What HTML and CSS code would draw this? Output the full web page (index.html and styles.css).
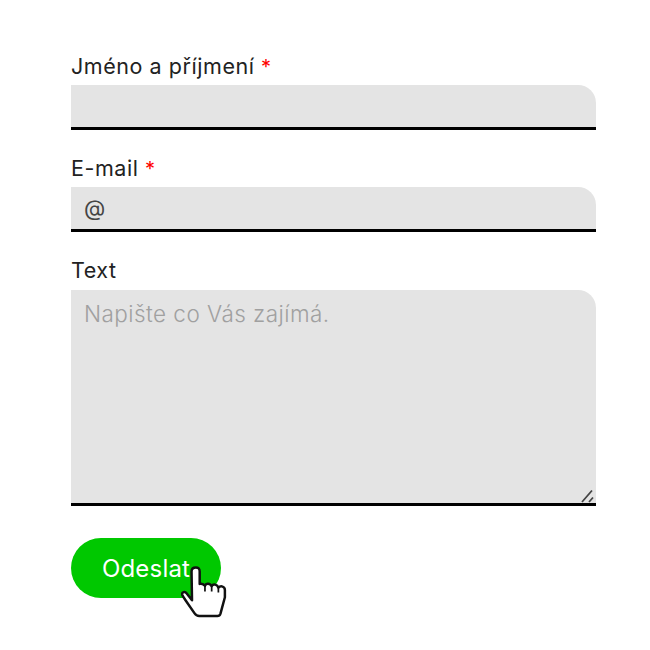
FILE: index.html
```html
<!DOCTYPE html>
<html lang="cs">
<head>
<meta charset="utf-8">
<title>Formulář</title>
<link rel="stylesheet" href="styles.css">
</head>
<body>
<form class="form">
  <div class="field">
    <label class="label">Jméno a příjmení <span class="req">*</span></label>
    <div class="input"></div>
  </div>
  <div class="field">
    <label class="label">E-mail <span class="req">*</span></label>
    <div class="input">@</div>
  </div>
  <div class="field">
    <label class="label">Text</label>
    <div class="textarea">Napište co Vás zajímá.
      <svg class="grip" width="16" height="15" viewBox="0 0 16 15"><path d="M2 14L12 2.5M9 14L13 9.5" stroke="#444" stroke-width="1.8" fill="none"/></svg>
    </div>
  </div>
  <div class="actions">
    <span class="button">Odeslat</span>
    <svg class="hand" width="46" height="55" viewBox="0 0 48 56">
      <path d="M11.5 36L6 29C4 26.5 1 27.5 1.2 30C1.4 31.5 3 33 4 35L14 49.5C15.2 51.3 16.5 52.5 19 52.5H38C39.8 52.5 40.7 51.5 41.2 50L45.8 33V25.5C45.8 21.5 41.5 20.5 39 23C38 19.5 33.5 18.5 32 21.5C30.5 18 26 18 25 21C23.5 19 21.5 18.5 19.5 19V6C19.5 3 18 1.8 15.5 1.8C13 1.8 11 3 11 6Z" fill="#fff" stroke="#111" stroke-width="2.6" stroke-linejoin="round"/>
      <path d="M25 21V27M32 21.5V27M39 23V28" stroke="#111" stroke-width="1.8" fill="none"/>
    </svg>
  </div>
</form>
</body>
</html>
```
FILE: styles.css
```css
html, body { margin: 0; padding: 0; background: #fff; }
body { width: 650px; height: 650px; overflow: hidden; font-family: Inter, "Liberation Sans", sans-serif; color: #222; }
.form { display: flex; flex-direction: column; padding: 53px 54px 0 71px; }
.field { display: flex; flex-direction: column; margin-bottom: 25px; }
.field:nth-child(3) { margin-bottom: 32px; }
.field:nth-child(3) .label { height: 33px; }
.label { font-size: 21.5px; line-height: 26px; height: 32px; letter-spacing: .55px; white-space: nowrap; }
.req { color: #f00; letter-spacing: 0; font-size: 20px; }
.input { box-sizing: border-box; height: 45px; background: #e4e4e4; border-bottom: 3px solid #000; border-radius: 0 18px 0 0; padding: 8px 13px 0; font-size: 22px; line-height: 26px; color: #444; }
.textarea { position: relative; box-sizing: border-box; height: 216px; background: #e4e4e4; border-bottom: 3px solid #000; border-radius: 0 18px 0 0; padding: 10px 13px; font-size: 22.5px; font-weight: 300; letter-spacing: .45px; line-height: 27px; color: #a0a0a0; }
.grip { position: absolute; right: 0; bottom: 0; }
.actions { position: relative; align-self: flex-start; }
.button { display: flex; align-items: center; justify-content: center; width: 150px; height: 60px; border-radius: 30px; background: #00c800; color: #fff; font-size: 24px; letter-spacing: .2px; }
.hand { position: absolute; left: 110px; top: 27px; }
```
